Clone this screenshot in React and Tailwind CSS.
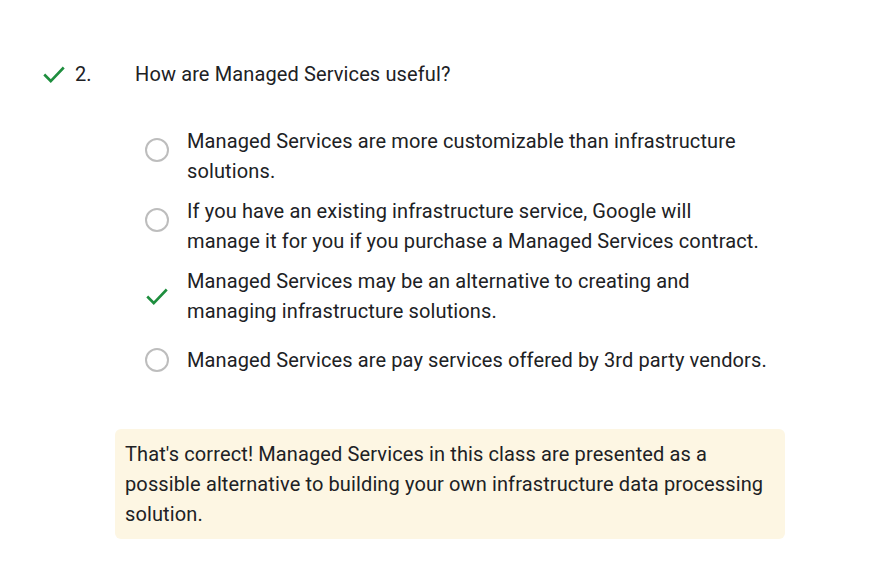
import React from "react";

const Check = ({ className }) => (
  <svg viewBox="0 0 24 24" className={className} fill="none" stroke="#1e8e3e" strokeWidth="2.4">
    <path d="M3 12.5 L9 18.5 L21 6" />
  </svg>
);

const Radio = () => (
  <div className="w-6 h-6 rounded-full border-2 border-[#bdbdbd] bg-white" />
);

const options = [
  { text: "Managed Services are more customizable than infrastructure solutions.", correct: false },
  { text: "If you have an existing infrastructure service, Google will manage it for you if you purchase a Managed Services contract.", correct: false },
  { text: "Managed Services may be an alternative to creating and managing infrastructure solutions.", correct: true },
  { text: "Managed Services are pay services offered by 3rd party vendors.", correct: false },
];

export default function App() {
  return (
    <div className="w-[889px] h-[570px] bg-white text-[#202124] font-['Roboto',sans-serif] text-[20px] leading-[30px] tracking-[0.12px]">
      <div className="pt-[59px] flex items-center">
        <div className="w-[75px] flex justify-end pr-[8px]">
          <Check className="w-[26px] h-[26px]" />
        </div>
        <div className="w-[60px]">2.</div>
        <div>How are Managed Services useful?</div>
      </div>
      <div className="mt-[37px] pl-[145px] w-[800px] flex flex-col gap-[10px]">
        {options.map((o, i) => (
          <div key={i} className="flex items-start">
            {o.correct ? (
              <div className="w-[42px] self-center flex items-center">
                <Check className="w-[26px] h-[26px] -ml-px" />
              </div>
            ) : (
              <div className="w-[42px] h-12 flex items-center">
                <Radio />
              </div>
            )}
            <div className="w-[580px] min-h-12 flex items-center">{o.text}</div>
          </div>
        ))}
      </div>
      <div className="ml-[115px] mt-[45px] w-[670px] rounded-md bg-[#fdf6e3] px-[10px] py-[10px]">
        That's correct! Managed Services in this class are presented as a possible alternative to building your own infrastructure data processing solution.
      </div>
    </div>
  );
}
